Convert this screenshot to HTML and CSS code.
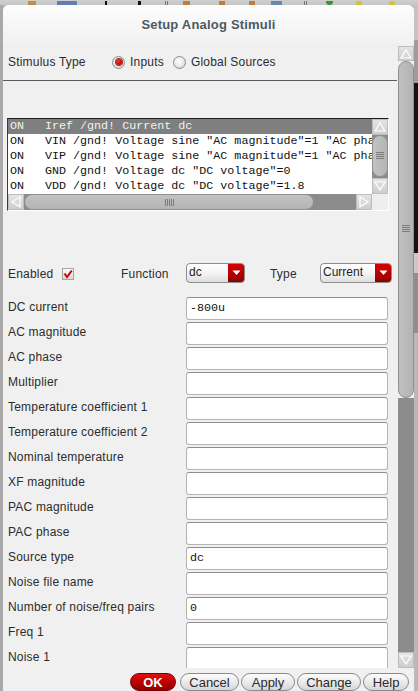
FILE: index.html
```html
<!DOCTYPE html>
<html>
<head>
<meta charset="utf-8">
<title>Setup Analog Stimuli</title>
<link rel="stylesheet" href="styles.css">
</head>
<body>
<div class="toolbar">
  <span class="tb tb1"></span><span class="tb tb2"></span><span class="tb tb3"></span><span class="tb tb4"></span>
  <span class="tb tb5"></span><span class="tb tb6"></span><span class="tb tb7"></span><span class="tb tb8"></span>
  <span class="tb tb9"></span><span class="tb tb10"></span><span class="tb tb11"></span><span class="tb tb12"></span><span class="tb tb13"></span>
</div>
<div class="frame">
  <div class="edge-left"></div>
  <div class="dialog">
    <div class="titlebar">Setup Analog Stimuli</div>
    <div class="main">
      <div class="content">
        <div class="stim-row">
          <span class="stim-label">Stimulus Type</span>
          <span class="radio on"></span><span class="radio-text">Inputs</span>
          <span class="radio"></span><span class="radio-text">Global Sources</span>
        </div>
        <div class="sep"></div>
        <div class="list">
          <div class="rows">
            <div class="row sel"><span class="c-on">ON</span><span>Iref /gnd! Current dc</span></div>
            <div class="row"><span class="c-on">ON</span><span>VIN /gnd! Voltage sine "AC magnitude"=1 "AC pha</span></div>
            <div class="row"><span class="c-on">ON</span><span>VIP /gnd! Voltage sine "AC magnitude"=1 "AC pha</span></div>
            <div class="row"><span class="c-on">ON</span><span>GND /gnd! Voltage dc "DC voltage"=0</span></div>
            <div class="row"><span class="c-on">ON</span><span>VDD /gnd! Voltage dc "DC voltage"=1.8</span></div>
          </div>
          <div class="lv">
            <div class="arrow a-v"><svg width="14" height="14" viewBox="0 0 14 14"><polygon points="7,3 12,11 2,11" fill="#d9d9d9" stroke="#ffffff" stroke-width="1.2"/></svg></div>
            <div class="lthumb"><span class="grip-h"></span></div>
            <div class="arrow a-v"><svg width="14" height="14" viewBox="0 0 14 14"><polygon points="2,3 12,3 7,11" fill="#d9d9d9" stroke="#ffffff" stroke-width="1.2"/></svg></div>
          </div>
          <div class="lh">
            <div class="arrow a-h"><svg width="14" height="14" viewBox="0 0 14 14"><polygon points="3,7 11,2 11,12" fill="#d9d9d9" stroke="#ffffff" stroke-width="1.2"/></svg></div>
            <div class="hthumb"><span class="grip-v"></span></div>
            <div class="htrack"></div>
            <div class="arrow a-h"><svg width="14" height="14" viewBox="0 0 14 14"><polygon points="3,2 11,7 3,12" fill="#d9d9d9" stroke="#ffffff" stroke-width="1.2"/></svg></div>
          </div>
          <div class="corner"></div>
        </div>
        <div class="enable-row">
          <span class="lbl">Enabled</span>
          <span class="check"><svg width="10" height="10" viewBox="0 0 10 10"><path d="M1.5 4.5 L4 8 L8.8 1.5" fill="none" stroke="#d10000" stroke-width="2"/></svg></span>
          <span class="lbl">Function</span>
          <span class="dd dd-fn"><span class="dd-text">dc</span><span class="dd-btn"><svg width="9" height="6" viewBox="0 0 9 6"><polygon points="0.5,0.5 8.5,0.5 4.5,5" fill="#ffffff"/></svg></span></span>
          <span class="lbl">Type</span>
          <span class="dd dd-type"><span class="dd-text">Current</span><span class="dd-btn"><svg width="9" height="6" viewBox="0 0 9 6"><polygon points="0.5,0.5 8.5,0.5 4.5,5" fill="#ffffff"/></svg></span></span>
        </div>
        <div class="fields">
          <span class="lbl">DC current</span><span class="field">-800u</span>
          <span class="lbl">AC magnitude</span><span class="field"></span>
          <span class="lbl">AC phase</span><span class="field"></span>
          <span class="lbl">Multiplier</span><span class="field"></span>
          <span class="lbl">Temperature coefficient 1</span><span class="field"></span>
          <span class="lbl">Temperature coefficient 2</span><span class="field"></span>
          <span class="lbl">Nominal temperature</span><span class="field"></span>
          <span class="lbl">XF magnitude</span><span class="field"></span>
          <span class="lbl">PAC magnitude</span><span class="field"></span>
          <span class="lbl">PAC phase</span><span class="field"></span>
          <span class="lbl">Source type</span><span class="field">dc</span>
          <span class="lbl">Noise file name</span><span class="field"></span>
          <span class="lbl">Number of noise/freq pairs</span><span class="field">0</span>
          <span class="lbl">Freq 1</span><span class="field"></span>
          <span class="lbl">Noise 1</span><span class="field"></span>
        </div>
      </div>
      <div class="vscroll">
        <div class="arrow a-main"><svg width="14" height="14" viewBox="0 0 14 14"><polygon points="7,3 12,11 2,11" fill="#d9d9d9" stroke="#ffffff" stroke-width="1.2"/></svg></div>
        <div class="mthumb"><span class="grip-h"></span></div>
        <div class="mtrack"></div>
        <div class="arrow a-main"><svg width="14" height="14" viewBox="0 0 14 14"><polygon points="2,3 12,3 7,11" fill="#d9d9d9" stroke="#ffffff" stroke-width="1.2"/></svg></div>
      </div>
    </div>
    <div class="buttons">
      <span class="btn btn-ok">OK</span>
      <span class="btn btn-cancel">Cancel</span>
      <span class="btn btn-apply">Apply</span>
      <span class="btn btn-change">Change</span>
      <span class="btn btn-help">Help</span>
    </div>
  </div>
  <div class="edge-right">
    <div class="seg seg-a"></div>
    <div class="seg seg-b"></div>
    <div class="seg seg-c"></div>
    <div class="seg seg-d"></div>
    <div class="seg seg-e"></div>
    <div class="seg seg-f"></div>
  </div>
</div>
</body>
</html>
```
FILE: styles.css
```css
* { box-sizing: border-box; }
html, body { margin: 0; padding: 0; }
body {
  width: 418px;
  height: 691px;
  overflow: hidden;
  background: #b8b8b8;
  font-family: "Liberation Sans", Arial, sans-serif;
  font-size: 12px;
  color: #2c2c2c;
}

/* background toolbar strip */
.toolbar {
  height: 5px;
  display: flex;
  align-items: flex-end;
  background: linear-gradient(#cfcfcf, #c6c6c6);
  overflow: hidden;
}
.tb { display: block; height: 4px; flex: none; }
.tb1 { margin-left: 28px; width: 8px; background: #c98a4a; }
.tb2 { margin-left: 21px; width: 20px; background: #5f7fae; }
.tb3 { margin-left: 28px; width: 2px; background: #111; }
.tb4 { margin-left: 31px; width: 3px; background: #111; }
.tb5 { margin-left: 24px; width: 4px; background: repeating-linear-gradient(90deg, #777 0 1px, transparent 1px 2px); }
.tb6 { margin-left: 14px; width: 7px; background: #c47a3a; }
.tb7 { margin-left: 29px; width: 6px; background: #c47a3a; }
.tb8 { margin-left: 24px; width: 6px; background: #c47a3a; }
.tb9 { margin-left: 16px; width: 11px; background: #6a86b4; }
.tb10 { margin-left: 22px; width: 4px; background: repeating-linear-gradient(90deg, #777 0 1px, transparent 1px 2px); }
.tb11 { margin-left: 18px; width: 7px; background: #2f9a33; border-radius: 0 0 4px 4px; }
.tb12 { margin-left: 23px; width: 6px; background: #d8c23a; }
.tb13 { margin-left: 27px; width: 6px; background: #d8c23a; }

.frame { display: flex; height: 686px; }
.edge-left { width: 3px; background: #a9a9a9; }
.edge-right { width: 4px; display: flex; flex-direction: column; }
.seg-a { height: 35px; background: #c4c4c4; }
.seg-b { height: 43px; background: #9c9c9c; }
.seg-c { height: 170px; background: #141414; }
.seg-d { height: 20px; background: #c9c9c9; }
.seg-e { height: 60px; background: #8e8e8e; }
.seg-f { flex: 1; background: #b9b9b9; }

.dialog {
  width: 411px;
  display: flex;
  flex-direction: column;
  background: #f0f0f0;
  border-radius: 6px 6px 0 0;
  overflow: hidden;
}

.titlebar {
  height: 38px;
  flex: none;
  display: flex;
  align-items: center;
  justify-content: center;
  padding-top: 1px;
  background: linear-gradient(#fdfdfd, #f6f6f6 60%, #f2f2f2);
  font-size: 13px;
  font-weight: bold;
  letter-spacing: 0.2px;
  color: #4c5a62;
}

.main { display: flex; height: 625px; flex: none; }
.content { width: 395px; overflow: hidden; letter-spacing: 0.2px; }

/* stimulus type row */
.stim-row {
  height: 37px;
  display: flex;
  align-items: center;
  padding-left: 5px;
  padding-top: 1px;
}
.stim-label { width: 104px; }
.radio {
  width: 13px;
  height: 13px;
  flex: none;
  border-radius: 50%;
  border: 1px solid #8d8d8d;
  background: radial-gradient(circle at 45% 40%, #ffffff 0, #ececec 45%, #c9c9c9 100%);
  display: flex;
  align-items: center;
  justify-content: center;
}
.radio.on::after {
  content: "";
  width: 6px;
  height: 6px;
  border-radius: 50%;
  background: radial-gradient(circle at 40% 35%, #ff3030, #c00000 70%);
  box-shadow: 0 0 0 1px #9a2a2a;
}
.radio-text { margin-left: 5px; margin-right: 9px; }

.sep { height: 1px; width: 394px; background: #5c5c5c; }

/* list box */
.list {
  margin: 37px 0 0 4px;
  width: 382px;
  height: 93px;
  display: grid;
  grid-template-columns: 364px 16px;
  grid-template-rows: 75px 16px;
  border-top: 1px solid #1c1c1c;
  border-left: 1px solid #3a3a3a;
  border-bottom: 1px solid #ffffff;
  border-right: 1px solid #ffffff;
  letter-spacing: 0;
}
.rows {
  background: #ffffff;
  overflow: hidden;
  font-family: "Liberation Mono", "DejaVu Sans Mono", monospace;
  font-size: 11.7px;
  color: #111;
}
.row {
  height: 15px;
  line-height: 15px;
  padding-left: 2px;
  white-space: nowrap;
  display: flex;
}
.row.sel { background: #7f7f7f; color: #f2f2f2; }
.c-on { width: 35px; flex: none; }

.arrow {
  display: flex;
  align-items: center;
  justify-content: center;
  background: linear-gradient(#e4e4e4, #cdcdcd);
  border: 1px solid #bdbdbd;
  flex: none;
}
.lv { display: flex; flex-direction: column; background: #8c8c8c; }
.a-v { height: 16px; }
.lthumb {
  flex: 1;
  margin: 0 0 1px 0;
  border: 1px solid #8f8f8f;
  border-radius: 8px;
  background: linear-gradient(90deg, #c2c2c2, #b4b4b4);
  display: flex;
  align-items: center;
  justify-content: center;
}
.grip-h {
  width: 8px;
  height: 8px;
  background: repeating-linear-gradient(#7c7c7c 0 1px, transparent 1px 2px);
}
.lh { display: flex; background: #8c8c8c; }
.a-h { width: 16px; }
.hthumb {
  width: 290px;
  border: 1px solid #8f8f8f;
  border-radius: 8px;
  background: linear-gradient(#c2c2c2, #b4b4b4);
  display: flex;
  align-items: center;
  justify-content: center;
}
.grip-v {
  width: 9px;
  height: 7px;
  background: repeating-linear-gradient(90deg, #7c7c7c 0 1px, transparent 1px 2px);
}
.htrack { flex: 1; }
.corner { background: #eeeeee; }

/* enabled row */
.enable-row {
  margin-top: 52px;
  height: 20px;
  padding-left: 5px;
  display: grid;
  grid-template-columns: 54px 59px 65px 84px 50px 72px;
  align-items: center;
  justify-items: start;
}
.enable-row .lbl { padding-top: 2px; }
.check {
  width: 12px;
  height: 12px;
  margin-top: 1px;
  border: 1px solid #a3a3a3;
  background: linear-gradient(#fbfbfb, #d9d9d9);
  display: flex;
  align-items: center;
  justify-content: center;
}
.dd {
  height: 20px;
  display: flex;
  border: 1px solid #8c8c8c;
  border-radius: 4px;
  overflow: hidden;
  background: linear-gradient(#ffffff, #f4f4f4 50%, #dedede);
  letter-spacing: 0;
}
.dd-fn { width: 59px; }
.dd-type { width: 72px; }
.dd-text { flex: 1; padding-left: 2px; line-height: 16px; color: #222; }
.dd-btn {
  width: 16px;
  flex: none;
  background: linear-gradient(#d80000, #b00000 60%, #8e0000);
  display: flex;
  align-items: center;
  justify-content: center;
}

/* fields */
.fields {
  margin-top: 14px;
  padding-left: 5px;
  display: grid;
  grid-template-columns: 178px 202px;
  grid-auto-rows: 23px;
  row-gap: 2px;
  align-items: center;
}
.fields .lbl { padding-bottom: 3px; white-space: nowrap; }
.field {
  height: 23px;
  background: #ffffff;
  border: 1px solid #b4b4b4;
  border-top-color: #8e8e8e;
  border-radius: 3px;
  padding-left: 3px;
  font-family: "Liberation Mono", "DejaVu Sans Mono", monospace;
  font-size: 11.7px;
  letter-spacing: 0;
  line-height: 20px;
  color: #111;
}

/* main vertical scrollbar */
.vscroll {
  width: 16px;
  flex: none;
  padding-top: 3px;
  display: flex;
  flex-direction: column;
}
.a-main { height: 15px; }
.mthumb {
  height: 337px;
  flex: none;
  border: 1px solid #8f8f8f;
  border-radius: 8px;
  background: linear-gradient(90deg, #c0c0c0, #b3b3b3);
  display: flex;
  align-items: flex-start;
  justify-content: center;
  padding-top: 163px;
}
.mtrack { flex: 1; background: #8c8c8c; }
.vscroll .arrow:last-child { height: 16px; }

/* buttons */
.buttons {
  height: 23px;
  flex: none;
  display: flex;
  justify-content: flex-end;
  padding: 5px 5px 0 0;
}
.btn {
  height: 18px;
  display: flex;
  align-items: center;
  justify-content: center;
  border: 1px solid #8a8a8a;
  border-radius: 9px;
  background: linear-gradient(#fdfdfd, #ebebeb 50%, #d6d6d6);
  font-size: 13px;
  color: #2a2a2a;
  margin-left: 2px;
}
.btn-ok {
  width: 46px;
  background: linear-gradient(#e01010, #b80000 55%, #8c0000);
  border-color: #7a0000;
  color: #ffffff;
  font-weight: bold;
}
.btn-cancel { width: 59px; margin-left: 4px; }
.btn-apply { width: 54px; }
.btn-change { width: 64px; }
.btn-help { width: 46px; }
```
